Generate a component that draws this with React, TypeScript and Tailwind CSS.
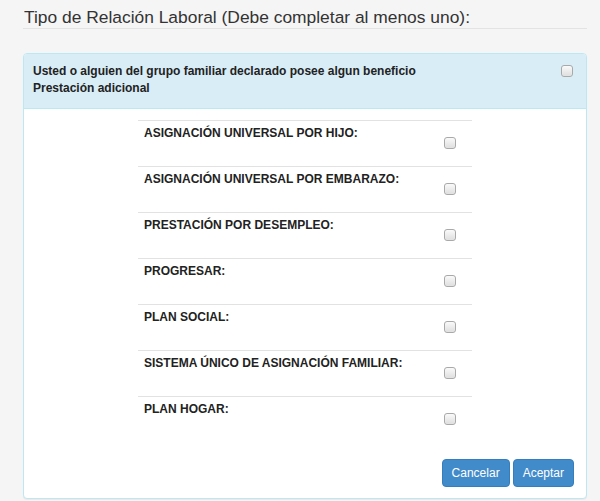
const items = [
  'ASIGNACIÓN UNIVERSAL POR HIJO:',
  'ASIGNACIÓN UNIVERSAL POR EMBARAZO:',
  'PRESTACIÓN POR DESEMPLEO:',
  'PROGRESAR:',
  'PLAN SOCIAL:',
  'SISTEMA ÚNICO DE ASIGNACIÓN FAMILIAR:',
  'PLAN HOGAR:',
];

function Check() {
  return (
    <span className="block w-[12px] h-[12px] rounded-[3px] border border-[#a9a9a9] bg-gradient-to-b from-[#fafafa] to-[#dedede] shadow-[inset_0_0_1px_#fff]" />
  );
}

export default function App() {
  return (
    <div className="min-h-[501px] bg-[#f5f5f5] pl-[23px] pr-[13px] pt-[7px] pb-[3px] font-['Liberation_Sans',Arial,sans-serif] text-[#333]">
      <h3 className="text-[17.4px] leading-[20px] pl-[1px] pb-[1px] border-b border-[#e3e3e3] text-[#333]">
        Tipo de Relación Laboral (Debe completar al menos uno):
      </h3>

      <div className="mt-[24px] border border-[#bce8f1] rounded-[4px] bg-white shadow-[0_1px_1px_rgba(0,0,0,0.05)]">
        <div className="flex justify-between bg-[#d9edf7] border-b border-[#bce8f1] rounded-t-[3px] pl-[9px] pr-[13px] pt-[9px] pb-[11px]">
          <div className="text-[12px] leading-[17px] font-bold text-[#222]">
            <div>Usted o alguien del grupo familiar declarado posee algun beneficio</div>
            <div>Prestación adicional</div>
          </div>
          <div className="pt-[2px]">
            <Check />
          </div>
        </div>

        <div className="pt-[11px] px-[12px] pb-[11px]">
          <div className="w-[334px] mx-auto">
            {items.map((t) => (
              <div key={t} className="h-[46px] border-t border-[#e2e2e2] flex justify-between pl-[6px] pr-[16px] pt-[4px]">
                <span className="text-[12px] leading-[17px] font-bold text-[#222]">{t}</span>
                <span className="pt-[12px]">
                  <Check />
                </span>
              </div>
            ))}
          </div>

          <div className="flex justify-end gap-[3px] mt-[17px]">
            <button className="h-[28px] px-[9px] text-[12px] text-white bg-[#428bca] border border-[#357ebd] rounded-[4px]">
              Cancelar
            </button>
            <button className="h-[28px] px-[9px] text-[12px] text-white bg-[#428bca] border border-[#357ebd] rounded-[4px]">
              Aceptar
            </button>
          </div>
        </div>
      </div>
    </div>
  );
}
